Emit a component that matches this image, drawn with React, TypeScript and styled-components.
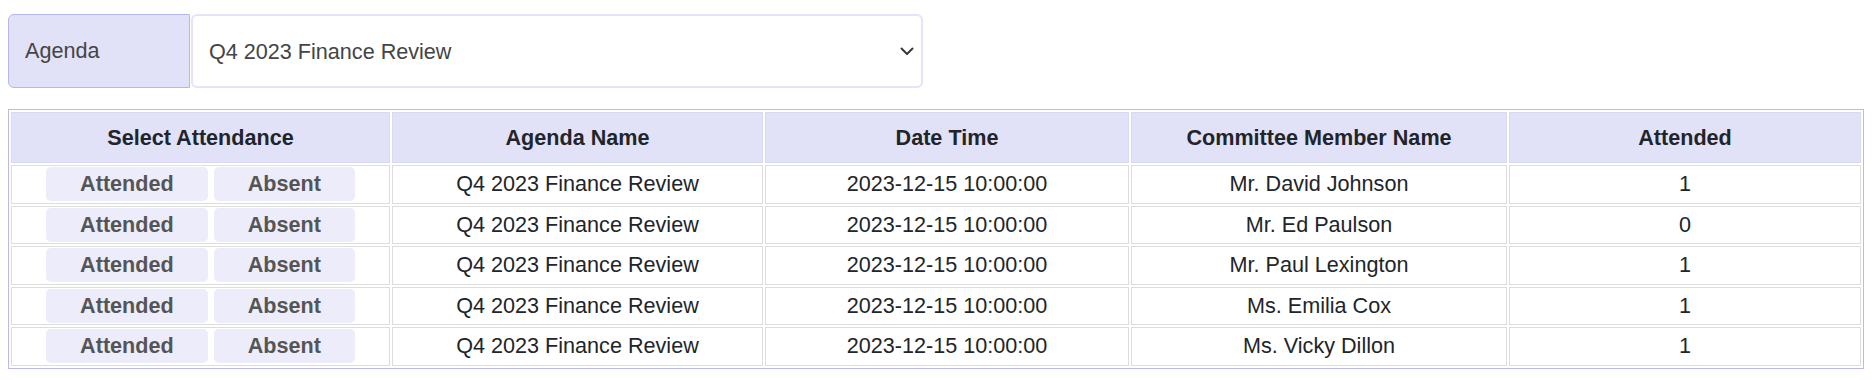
import React from "react";
import styled, { createGlobalStyle } from "styled-components";

const GlobalStyle = createGlobalStyle`
  *, *::before, *::after { box-sizing: border-box; }
  body {
    margin: 8px;
    font-family: "Liberation Sans", Arial, sans-serif;
    background: #ffffff;
    color: #212529;
  }
`;

const Page = styled.div`
  padding-top: 6px;
`;

const InputGroup = styled.div`
  display: flex;
  width: 915px;
  height: 74px;
  margin-bottom: 21px;
`;

const GroupLabel = styled.span`
  display: flex;
  align-items: center;
  width: 182px;
  padding: 0 16px;
  background: #e1e1f8;
  border: 1px solid #b6b6ee;
  border-radius: 6px 0 0 6px;
  color: #454545;
  font-size: 21.6px;
  margin-right: 1px;
`;

const SelectWrap = styled.div`
  position: relative;
  flex: 1;
  display: flex;
`;

const Select = styled.select`
  appearance: none;
  -webkit-appearance: none;
  flex: 1;
  height: 100%;
  padding: 0 48px 0 16px;
  border: 2px solid #e3e3f9;
  border-radius: 6px;
  background: #ffffff;
  color: #444444;
  font-family: "Liberation Sans", Arial, sans-serif;
  font-size: 21.6px;
  outline: none;
`;

const Chevron = styled.svg`
  position: absolute;
  right: 8px;
  top: 50%;
  transform: translateY(-50%);
  pointer-events: none;
`;

const Table = styled.table`
  width: calc(100% - 2px);
  table-layout: fixed;
  border-collapse: separate;
  border-spacing: 2px;
  border: 1px solid #b9b9ea;
  font-size: 21.6px;
`;

const HeadCell = styled.th<{ $w: number }>`
  width: ${(p) => p.$w}px;
  height: 51px;
  padding: 0 6px;
  background: #e1e1f8;
  border: 1px solid #d9d9f3;
  color: #212529;
  font-weight: bold;
  text-align: center;
  vertical-align: middle;
`;

const Cell = styled.td`
  height: 38.5px;
  padding: 0 4px;
  border: 1px solid #dddddd;
  text-align: center;
  vertical-align: middle;
  color: #212529;
`;

const ButtonRow = styled.div`
  display: flex;
  justify-content: center;
  gap: 6px;
`;

const ChoiceButton = styled.button`
  height: 34px;
  padding: 0 34px;
  border: none;
  border-radius: 5px;
  background: #ececfa;
  color: #555555;
  font-family: "Liberation Sans", Arial, sans-serif;
  font-size: 21.6px;
  font-weight: bold;
  cursor: pointer;
`;

const columns = [
  { title: "Select Attendance", w: 379 },
  { title: "Agenda Name", w: 371 },
  { title: "Date Time", w: 364 },
  { title: "Committee Member Name", w: 376 },
  { title: "Attended", w: 352 },
];

const rows = [
  { member: "Mr. David Johnson", attended: 1 },
  { member: "Mr. Ed Paulson", attended: 0 },
  { member: "Mr. Paul Lexington", attended: 1 },
  { member: "Ms. Emilia Cox", attended: 1 },
  { member: "Ms. Vicky Dillon", attended: 1 },
];

export default function App() {
  return (
    <Page>
      <GlobalStyle />
      <InputGroup>
        <GroupLabel>Agenda</GroupLabel>
        <SelectWrap>
          <Select defaultValue="q4">
            <option value="q4">Q4 2023 Finance Review</option>
          </Select>
          <Chevron width="16" height="16" viewBox="0 0 16 16">
            <path
              d="M2.5 5.5 L8 11 L13.5 5.5"
              fill="none"
              stroke="#343a40"
              strokeWidth="2"
              strokeLinecap="round"
              strokeLinejoin="round"
            />
          </Chevron>
        </SelectWrap>
      </InputGroup>
      <Table>
        <thead>
          <tr>
            {columns.map((c) => (
              <HeadCell key={c.title} $w={c.w}>
                {c.title}
              </HeadCell>
            ))}
          </tr>
        </thead>
        <tbody>
          {rows.map((r) => (
            <tr key={r.member}>
              <Cell>
                <ButtonRow>
                  <ChoiceButton>Attended</ChoiceButton>
                  <ChoiceButton>Absent</ChoiceButton>
                </ButtonRow>
              </Cell>
              <Cell>Q4 2023 Finance Review</Cell>
              <Cell>2023-12-15 10:00:00</Cell>
              <Cell>{r.member}</Cell>
              <Cell>{r.attended}</Cell>
            </tr>
          ))}
        </tbody>
      </Table>
    </Page>
  );
}
